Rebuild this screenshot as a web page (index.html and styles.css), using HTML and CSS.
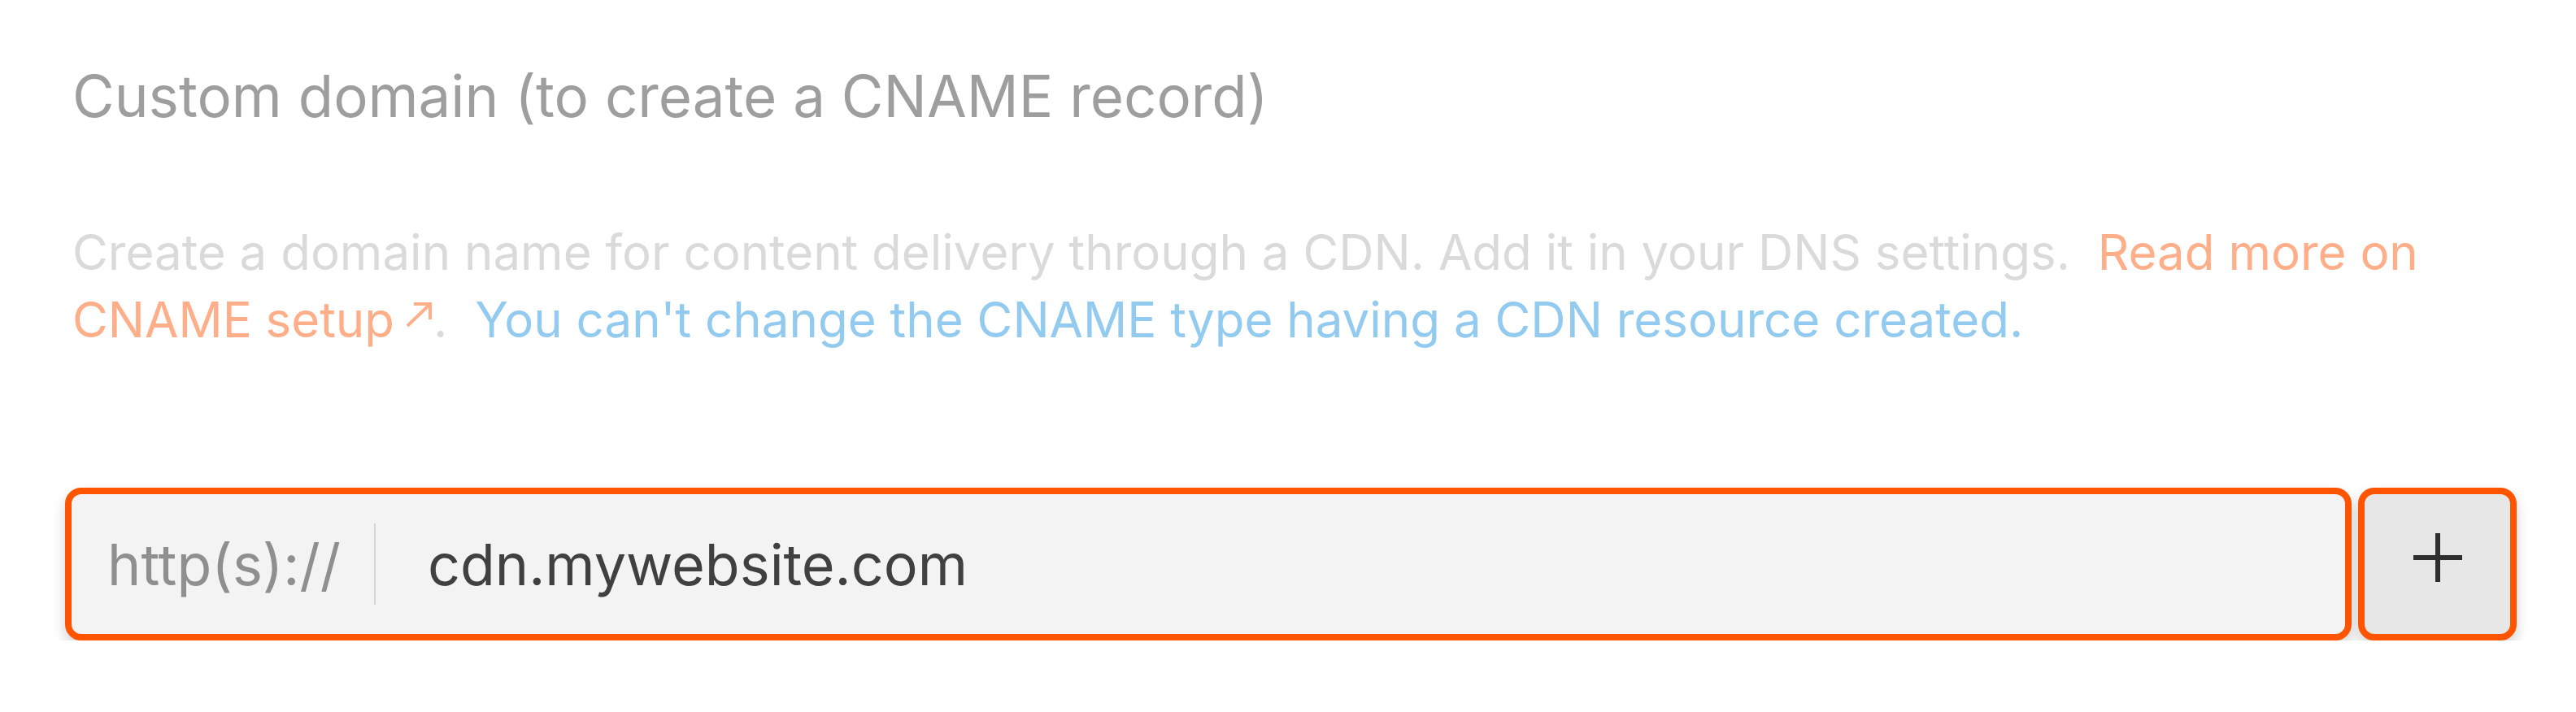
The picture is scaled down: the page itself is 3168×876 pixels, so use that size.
FILE: index.html
```html
<!DOCTYPE html>
<html lang="en">
<head>
<meta charset="utf-8">
<title>Custom domain</title>
<link rel="stylesheet" href="styles.css">
</head>
<body>
<div class="form">
  <div class="label">Custom domain (to create a CNAME record)</div>
  <p class="desc">Create a domain name for content delivery through a CDN. Add it in your DNS settings.&nbsp; <a class="link" href="#">Read more on CNAME setup<svg class="ext" width="36" height="32" viewBox="0 0 36 32"><path d="M4 30 L32 3 M12 3 H32 V22" fill="none" stroke="currentColor" stroke-width="4"/></svg></a>.&nbsp; <span class="note">You can't change the CNAME type having a CDN resource created.</span></p>
  <div class="row">
    <div class="field">
      <span class="prefix">http(s)://</span>
      <span class="divider"></span>
      <span class="value">cdn.mywebsite.com</span>
    </div>
    <button class="add" type="button" aria-label="Add">
      <svg width="60" height="60" viewBox="0 0 60 60"><path d="M30 0 V60 M0 30 H60" stroke="#2e2e2e" stroke-width="6"/></svg>
    </button>
  </div>
</div>
</body>
</html>
```
FILE: styles.css
```css
html, body {
  margin: 0;
  padding: 0;
  background: #ffffff;
}
body {
  font-family: Inter, "Noto Sans", sans-serif;
}
.form {
  padding: 76px 73px 0 80px;
}
.label {
  margin-left: 9px;
  font-size: 70.8px;
  line-height: 84px;
  color: #9e9e9e;
}
.desc {
  margin: 109px 0 0 9px;
  font-size: 60px;
  line-height: 83px;
  color: #dadada;
}
.link {
  color: #ffae8a;
  text-decoration: none;
}
.ext {
  margin-left: 12px;
  vertical-align: 12px;
}
.note {
  color: #93cbf0;
}
.row {
  display: flex;
  gap: 8px;
  margin-top: 165px;
}
.field {
  flex: 1;
  height: 172px;
  display: flex;
  align-items: center;
  padding-left: 44px;
  background: #f3f3f3;
  border: 8px solid #ff5500;
  border-radius: 20px;
  box-shadow: 0 8px 16px rgba(0, 0, 0, 0.18);
  font-size: 70px;
}
.prefix {
  color: #8f8f8f;
}
.divider {
  width: 2px;
  height: 100px;
  background: #d4d4d4;
  margin: 0 64px 0 41px;
}
.value {
  color: #404040;
}
.add {
  width: 195px;
  height: 188px;
  padding: 0 0 16px 0;
  display: flex;
  align-items: center;
  justify-content: center;
  background: #e7e7e7;
  border: 8px solid #ff5500;
  border-radius: 20px;
  box-shadow: 0 8px 16px rgba(0, 0, 0, 0.18);
  cursor: pointer;
}
```
